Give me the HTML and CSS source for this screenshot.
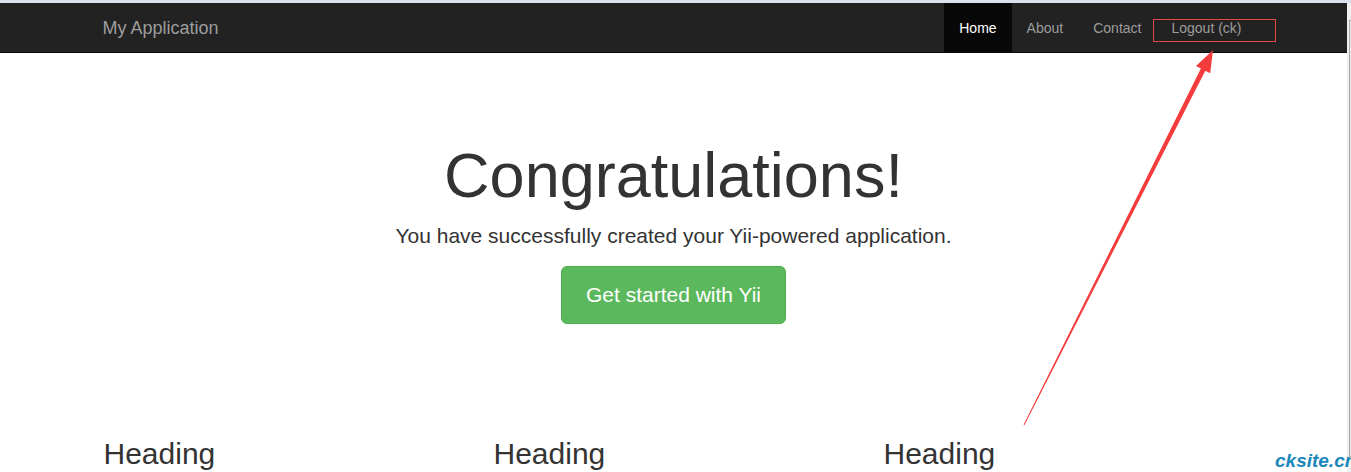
FILE: index.html
```html
<!DOCTYPE html>
<html lang="en">
<head>
    <meta charset="UTF-8">
    <meta name="viewport" content="width=device-width, initial-scale=1.0">
    <title>My Application</title>
    <link rel="stylesheet" href="styles.css">
</head>
<body>
    <div class="browser-strip"></div>
    <div class="viewport">
        <div class="page">
            <nav class="navbar">
                <div class="container navbar-inner">
                    <a class="navbar-brand" href="#">My Application</a>
                    <ul class="nav">
                        <li class="active"><a href="#">Home</a></li>
                        <li><a href="#">About</a></li>
                        <li><a href="#">Contact</a></li>
                        <li><a href="#">Logout (ck)</a></li>
                    </ul>
                </div>
            </nav>

            <div class="container content">
                <div class="jumbotron">
                    <h1>Congratulations!</h1>
                    <p class="lead">You have successfully created your Yii-powered application.</p>
                    <p><a class="btn btn-success" href="#">Get started with Yii</a></p>
                </div>

                <div class="row">
                    <div class="col"><h2>Heading</h2></div>
                    <div class="col"><h2>Heading</h2></div>
                    <div class="col"><h2>Heading</h2></div>
                </div>
            </div>
        </div>
        <div class="scrollbar"><div class="scrollbar-thumb"></div></div>
    </div>

    <!-- annotation drawn over the screenshot -->
    <div class="mark-box"></div>
    <svg class="arrow" width="1351" height="472" viewBox="0 0 1351 472">
        <polygon fill="#f43c3c" points="1023.6,424.8 1200.9,68.5 1196,66 1213,50 1210.2,73.2 1205.3,70.7 1024.4,425.2"/>
    </svg>
    <div class="watermark">cksite.cn</div>
</body>
</html>
```

FILE: styles.css
```css
html, body {
    margin: 0;
    height: 472px;
    overflow: hidden;
}
body {
    position: relative;
    font-family: "Liberation Sans", Arial, Helvetica, sans-serif;
    font-size: 14px;
    line-height: 1.42857;
    color: #333;
    background: #fff;
}
a {
    text-decoration: none;
}
.browser-strip {
    height: 3px;
    background: #d9e3ee;
}
.viewport {
    display: flex;
    height: 469px;
}
.page {
    flex: 1;
    min-width: 0;
}
.scrollbar {
    width: 4px;
    background: #f0f0f0;
    padding-top: 17px;
    box-sizing: border-box;
}
.scrollbar-thumb {
    height: 435px;
    margin-left: 2px;
    border-left: 1px solid #a9a9a9;
    border-top: 1px solid #a9a9a9;
    border-bottom: 1px solid #a9a9a9;
    background: #e8e8e8;
}
.container {
    width: 1170px;
    margin: 0 auto;
    padding: 0 15px;
    box-sizing: border-box;
}

/* navbar */
.navbar {
    background: #222;
    border-bottom: 1px solid #080808;
    height: 50px;
    box-sizing: border-box;
}
.navbar-inner {
    display: flex;
    justify-content: space-between;
}
.navbar-brand {
    margin-left: -16px;
    padding: 15px 15px 14px;
    font-size: 18px;
    line-height: 20px;
    color: #9d9d9d;
}
.nav {
    display: flex;
    list-style: none;
    margin: 0 -13px 0 0;
    padding: 0;
}
.nav a {
    display: block;
    padding: 15px 15px 14px;
    line-height: 20px;
    color: #9d9d9d;
}
.nav .active a {
    background: #080808;
    color: #fff;
}

/* content */
.content {
    padding-top: 20px;
}
.jumbotron {
    text-align: center;
    padding: 48px 0;
    margin-bottom: 30px;
}
.jumbotron h1 {
    font-size: 63px;
    font-weight: 500;
    line-height: 1.1;
    margin: 20px 0 10px;
}
.jumbotron p {
    font-size: 21px;
    margin: 0 0 15px;
}
.lead {
    line-height: 1.4;
    padding-top: 1px;
}
.btn {
    display: inline-block;
    font-size: 21px;
    line-height: 1.3333;
    padding: 14px 24px;
    border: 1px solid transparent;
    border-radius: 6px;
}
.btn-success {
    color: #fff;
    background: #5cb85c;
    border-color: #4cae4c;
}
.row {
    display: grid;
    grid-template-columns: repeat(3, 1fr);
    margin: 0 -15px;
}
.col {
    padding: 0 15px;
}
.col h2 {
    font-size: 30px;
    font-weight: 500;
    line-height: 1.1;
    margin: 20px 0 10px;
}

/* overlays */
.mark-box {
    position: absolute;
    left: 1153px;
    top: 19px;
    width: 121px;
    height: 21px;
    border: 1px solid #e34848;
}
.arrow {
    position: absolute;
    left: 0;
    top: 0;
    pointer-events: none;
}
.watermark {
    position: absolute;
    left: 1275px;
    top: 450px;
    font-size: 19px;
    line-height: 22px;
    font-weight: bold;
    font-style: italic;
    color: #1a88bb;
    white-space: nowrap;
}
```
